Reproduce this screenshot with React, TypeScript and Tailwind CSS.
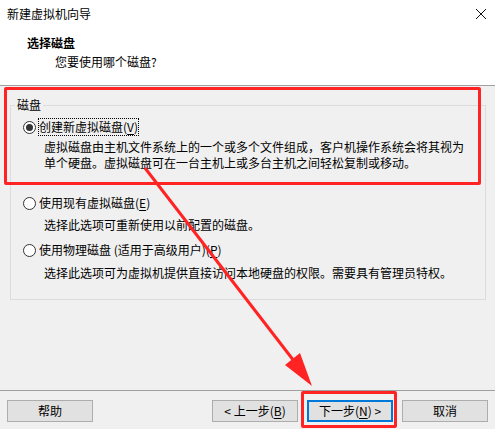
import React from 'react';

const font = { fontFamily: '"Noto Sans CJK SC", "Noto Sans", sans-serif' };

// mnemonic letter, underlined like a Windows access key
const Key = ({ k }: { k: string }) => (
  <>
    (<span className="underline underline-offset-2">{k}</span>)
  </>
);

const Radio = ({ checked }: { checked?: boolean }) => (
  <span className="flex h-[13px] w-[13px] shrink-0 items-center justify-center rounded-full border border-[#333333] bg-white">
    {checked && <span className="h-[7px] w-[7px] rounded-full bg-[#333333]" />}
  </span>
);

const Button = ({ children, primary }: { children: React.ReactNode; primary?: boolean }) => (
  <button
    className={
      primary
        ? 'flex h-[22px] w-[86px] items-center justify-center border-2 border-[#0078d7] bg-[#e1e1e1] text-[12px] leading-[16px] text-black'
        : 'flex h-[22px] w-[86px] items-center justify-center border border-[#adadad] bg-[#e1e1e1] text-[12px] leading-[16px] text-black'
    }
  >
    {children}
  </button>
);

export default function App() {
  return (
    <div className="relative flex h-[429px] w-[495px] flex-col overflow-hidden bg-[#f0f0f0] text-[12px] leading-[16px] text-black" style={font}>
      {/* title bar */}
      <div className="flex h-[28px] items-center justify-between bg-white pl-[7px] pr-[8px]">
        <span>新建虚拟机向导</span>
        <svg width="12" height="12" viewBox="0 0 12 12" className="mt-[-1px]">
          <path d="M1 1 L11 11 M11 1 L1 11" stroke="#111" strokeWidth="1" />
        </svg>
      </div>

      {/* header */}
      <div className="h-[58px] border-b border-[#a0a0a0] bg-white pt-[7px]">
        <div className="pl-[27px] font-bold">选择磁盘</div>
        <div className="mt-[3px] pl-[55px]">您要使用哪个磁盘?</div>
      </div>

      {/* body */}
      <div className="flex-1 pt-[11px]">
        <fieldset className="ml-[10px] w-[476px] border border-[#dcdcdc] pb-[18px]">
          <legend className="ml-[4px] px-[2px]">磁盘</legend>

          <div className="mt-[6px] flex items-center pl-[12px]">
            <Radio checked />
            <span className="ml-[3px] inline-block h-[16px] outline-1 outline-dotted outline-black">
              创建新虚拟磁盘<Key k="V" />
            </span>
          </div>
          <div className="mt-[4px] pl-[33px]">
            <div>虚拟磁盘由主机文件系统上的一个或多个文件组成，客户机操作系统会将其视为</div>
            <div>单个硬盘。虚拟磁盘可在一台主机上或多台主机之间轻松复制或移动。</div>
          </div>

          <div className="mt-[24px] flex items-center pl-[12px]">
            <Radio />
            <span className="ml-[3px]">
              使用现有虚拟磁盘<Key k="E" />
            </span>
          </div>
          <div className="mt-[6px] pl-[33px]">选择此选项可重新使用以前配置的磁盘。</div>

          <div className="mt-[9px] flex items-center pl-[12px]">
            <Radio />
            <span className="ml-[3px]">
              使用物理磁盘 (适用于高级用户)<Key k="P" />
            </span>
          </div>
          <div className="mt-[7px] pl-[33px]">选择此选项可为虚拟机提供直接访问本地硬盘的权限。需要具有管理员特权。</div>
        </fieldset>
      </div>

      {/* footer */}
      <div className="flex h-[39px] justify-between border-t border-[#a0a0a0] px-[7px] pt-[9px]">
        <Button>帮助</Button>
        <div className="flex gap-[9px]">
          <Button>
            &lt; 上一步<Key k="B" />
          </Button>
          <Button primary>
            下一步<Key k="N" /> &gt;
          </Button>
          <Button>取消</Button>
        </div>
      </div>

      {/* red annotations */}
      <div className="pointer-events-none absolute left-[4px] top-[87px] h-[98px] w-[477px] rounded-[2px] border-[3px] border-[#ff2323]" />
      <div className="pointer-events-none absolute left-[301px] top-[391px] h-[37px] w-[96px] rounded-[2px] border-[3px] border-[#ff2323]" />
      <svg className="pointer-events-none absolute left-0 top-0" width="495" height="429">
        <line x1="145" y1="168" x2="294" y2="361" stroke="#ff2323" strokeWidth="3" />
        <polygon points="312,386 300,353 285,365" fill="#ff2323" />
      </svg>
    </div>
  );
}
